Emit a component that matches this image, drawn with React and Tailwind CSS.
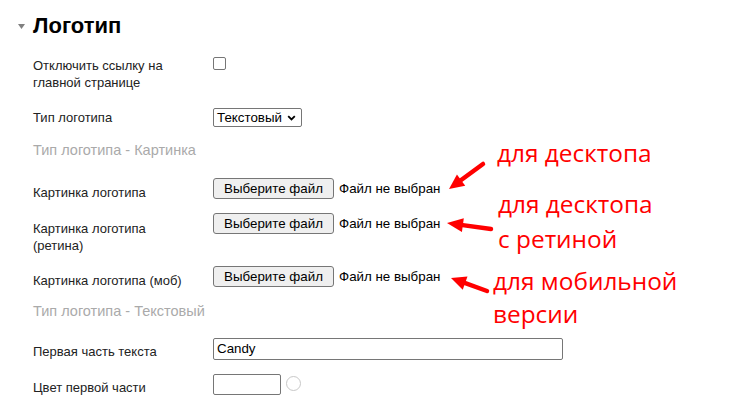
import React from "react";

function Arrow({ x1, y1, x2, y2, len = 15, half = 7, w = 4.5 }) {
  const dx = x2 - x1;
  const dy = y2 - y1;
  const L = Math.hypot(dx, dy);
  const ux = dx / L;
  const uy = dy / L;
  const bx = x2 - ux * len;
  const by = y2 - uy * len;
  const nx = -uy;
  const ny = ux;
  const pts = `${x2},${y2} ${bx + nx * half},${by + ny * half} ${bx - nx * half},${by - ny * half}`;
  return (
    <g fill="#ff0000" stroke="none">
      <line x1={x1} y1={y1} x2={bx + ux * 2} y2={by + uy * 2} stroke="#ff0000" strokeWidth={w} strokeLinecap="round" />
      <polygon points={pts} />
    </g>
  );
}

function Label({ children, pt = "pt-0" }) {
  return (
    <div className={`w-[180px] shrink-0 pr-[20px] text-[13px] leading-[17px] text-[#222] ${pt}`}>{children}</div>
  );
}

function FileInput() {
  return (
    <div className="flex items-center">
      <div className="flex h-[21px] w-[121px] items-center justify-center rounded-[3px] border border-[#767676] bg-[#efefef] text-[13.33px] text-black">
        Выберите файл
      </div>
      <span className="ml-[5px] text-[13.33px] text-black">Файл не выбран</span>
    </div>
  );
}

export default function App() {
  return (
    <div className="relative h-[403px] w-[738px] overflow-hidden bg-white font-['Liberation_Sans',Arial,sans-serif]">
      {/* heading */}
      <div className="flex items-center pl-[18px] pt-[13px]">
        <svg width="7" height="5" viewBox="0 0 7 5" className="mr-[8px]">
          <polygon points="0,0 7,0 3.5,5" fill="#808080" />
        </svg>
        <h1 className="text-[22px] font-bold leading-[26px] text-black">Логотип</h1>
      </div>

      <div className="flex flex-col pl-[33px]">
        {/* row A */}
        <div className="mt-[18px] flex items-start">
          <Label>Отключить ссылку на главной странице</Label>
          <div className="h-[13px] w-[13px] rounded-[2px] border border-[#767676] bg-white" />
        </div>

        {/* row B */}
        <div className="mt-[17px] flex items-start">
          <Label pt="pt-[1px]">Тип логотипа</Label>
          <div className="flex h-[19px] w-[89px] items-center justify-between rounded-[2px] border border-[#767676] bg-white pl-[3px] pr-[5px] text-[13.33px] text-black">
            <span>Текстовый</span>
            <svg width="9" height="6" viewBox="0 0 9 6">
              <path d="M1.2 1.2 L4.5 4.5 L7.8 1.2" fill="none" stroke="#000" strokeWidth="1.8" />
            </svg>
          </div>
        </div>

        {/* subheader */}
        <div className="mt-[15px] text-[14.5px] leading-[17px] text-[#aaaaaa]">Тип логотипа - Картинка</div>

        {/* row D */}
        <div className="mt-[19px] flex items-start">
          <Label pt="pt-[6px]">Картинка логотипа</Label>
          <FileInput />
        </div>

        {/* row E */}
        <div className="mt-[12px] flex items-start">
          <Label pt="pt-[7px]">Картинка логотипа (ретина)</Label>
          <FileInput />
        </div>

        {/* row F */}
        <div className="mt-[12px] flex items-start">
          <Label pt="pt-[6px]">Картинка логотипа (моб)</Label>
          <FileInput />
        </div>

        {/* subheader */}
        <div className="mt-[14px] text-[14.5px] leading-[17px] text-[#aaaaaa]">Тип логотипа - Текстовый</div>

        {/* row H */}
        <div className="mt-[18px] flex items-start">
          <Label pt="pt-[5px]">Первая часть текста</Label>
          <div className="flex h-[22px] w-[350px] items-center rounded-[2px] border border-[#767676] bg-white pl-[3px] text-[13.33px] text-black">
            Candy
          </div>
        </div>

        {/* row I */}
        <div className="mt-[14px] flex items-start">
          <Label pt="pt-[5px]">Цвет первой части</Label>
          <div className="h-[21px] w-[68px] rounded-[2px] border border-[#767676] bg-white" />
          <div className="ml-[5px] mt-[2px] h-[15px] w-[15px] rounded-full border border-[#c8c8c8] bg-white" />
        </div>
      </div>

      {/* annotations */}
      <div className="absolute left-[497px] top-[136px] font-['Open_Sans',sans-serif] text-[24.4px] leading-[34px] text-[#ff0000]">
        для десктопа
      </div>
      <div className="absolute left-[498px] top-[186px] font-['Open_Sans',sans-serif] text-[24.4px] leading-[35px] text-[#ff0000]">
        для десктопа
        <br />с ретиной
      </div>
      <div className="absolute left-[493px] top-[264px] font-['Open_Sans',sans-serif] text-[24.4px] leading-[33px] text-[#ff0000]">
        для мобильной
        <br />
        версии
      </div>

      <svg className="pointer-events-none absolute left-0 top-0" width="738" height="403">
        <Arrow x1={483} y1={164} x2={449} y2={189} />
        <Arrow x1={491} y1={229} x2={447} y2={223} len={16} />
        <Arrow x1={487} y1={291} x2={451} y2={278} />
      </svg>
    </div>
  );
}
